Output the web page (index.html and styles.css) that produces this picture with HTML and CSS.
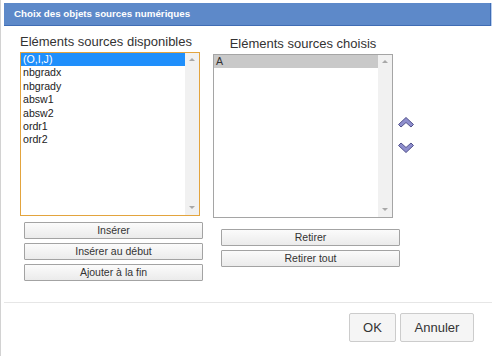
FILE: index.html
```html
<!DOCTYPE html>
<html lang="fr">
<head>
    <meta charset="UTF-8">
    <title>Choix des objets sources numériques</title>
    <link rel="stylesheet" href="styles.css">
</head>
<body>
    <div class="dialog">
        <div class="titlebar">Choix des objets sources numériques</div>
        <div class="content">
            <div class="col col-left">
                <div class="col-label">Eléments sources disponibles</div>
                <div class="listbox focused">
                    <ul class="items">
                        <li class="selected">(O,I,J)</li>
                        <li>nbgradx</li>
                        <li>nbgrady</li>
                        <li>absw1</li>
                        <li>absw2</li>
                        <li>ordr1</li>
                        <li>ordr2</li>
                    </ul>
                    <div class="scrollbar"><span class="arrow up"></span><span class="arrow down"></span></div>
                </div>
                <div class="actions">
                    <button class="btn">Insérer</button>
                    <button class="btn">Insérer au début</button>
                    <button class="btn">Ajouter à la fin</button>
                </div>
            </div>
            <div class="col col-right">
                <div class="col-label">Eléments sources choisis</div>
                <div class="list-row">
                    <div class="listbox">
                        <ul class="items">
                            <li class="selected grey">A</li>
                        </ul>
                        <div class="scrollbar"><span class="arrow up"></span><span class="arrow down"></span></div>
                    </div>
                    <div class="order">
                        <svg width="16" height="11" viewBox="0 0 16 11"><polygon points="0.5,7.5 8,0.5 15.5,7.5 13,10 8,5.5 3,10" fill="#8e8ecd" stroke="#52528c" stroke-width="1" stroke-linejoin="round"/></svg>
                        <svg width="16" height="11" viewBox="0 0 16 11"><polygon points="0.5,3.5 8,10.5 15.5,3.5 13,1 8,5.5 3,1" fill="#8e8ecd" stroke="#52528c" stroke-width="1" stroke-linejoin="round"/></svg>
                    </div>
                </div>
                <div class="actions">
                    <button class="btn">Retirer</button>
                    <button class="btn">Retirer tout</button>
                </div>
            </div>
        </div>
        <div class="footer">
            <button class="footer-btn ok">OK</button>
            <button class="footer-btn cancel">Annuler</button>
        </div>
    </div>
</body>
</html>
```

FILE: styles.css
```css
* {
    margin: 0;
    padding: 0;
    box-sizing: border-box;
    font-family: "Liberation Sans", Arial, sans-serif;
}

body {
    background-color: #ffffff;
    color: #333333;
}

.dialog {
    height: 356px;
    display: flex;
    flex-direction: column;
    border-left: 1px solid #d2d2d2;
}

.titlebar {
    margin: 3px 3px 0 3px;
    height: 23px;
    padding-left: 10px;
    line-height: 22px;
    background-color: #5d89c9;
    border-right: 1px solid #3f6cb4;
    border-bottom: 1px solid #3f6cb4;
    box-shadow: 1px 0 0 #b8cff0;
    color: #ffffff;
    font-size: 9.75px;
    font-weight: bold;
}

.content {
    flex: 1;
    display: flex;
    padding: 8px 0 0 19px;
}

.col-left {
    width: 193px;
}

.col-right {
    padding-top: 2px;
}

.col-label {
    font-size: 13px;
    line-height: 15px;
    color: #333333;
    margin-bottom: 3px;
    white-space: nowrap;
}

.col-right .col-label {
    width: 180px;
    text-align: center;
}

.listbox {
    width: 180px;
    height: 164px;
    display: flex;
    border: 1px solid #a5a5a5;
    background-color: #ffffff;
}

.listbox.focused {
    border-color: #e3a43e;
}

.items {
    flex: 1;
    list-style: none;
    font-size: 10.6px;
    line-height: 13.4px;
    color: #222222;
}

.items li {
    padding-left: 2px;
}

.items li.selected {
    background-color: #1f8ffb;
    color: #ffffff;
}

.items li.selected.grey {
    background-color: #c9c9c9;
    color: #333333;
}

.scrollbar {
    width: 14px;
    background-color: #f1f1f1;
    display: flex;
    flex-direction: column;
    justify-content: space-between;
    align-items: center;
    padding: 5px 0 6px;
}

.arrow {
    width: 0;
    height: 0;
    border-left: 3px solid transparent;
    border-right: 3px solid transparent;
}

.arrow.up {
    border-bottom: 3px solid #a8a8a8;
}

.arrow.down {
    border-top: 3px solid #a8a8a8;
}

.list-row {
    display: flex;
}

.order {
    display: flex;
    flex-direction: column;
    gap: 14px;
    padding: 63px 0 0 5px;
}

.actions {
    display: flex;
    flex-direction: column;
    gap: 4px;
    margin: 6px 0 0 4px;
}

.col-right .actions {
    margin: 11px 0 0 8px;
}

.btn {
    width: 179px;
    height: 17px;
    border: 1px solid #a3a3a3;
    border-radius: 1px;
    background: linear-gradient(#fbfbfb, #ebebeb);
    color: #333333;
    font-size: 10.5px;
    line-height: 15px;
    cursor: pointer;
}

.footer {
    margin: 0 2px 0 3px;
    border-top: 1px solid #e6e6e6;
    padding: 10px 18px 14px 0;
    display: flex;
    justify-content: flex-end;
    gap: 4px;
}

.footer-btn {
    height: 29px;
    border: 1px solid #cccccc;
    border-radius: 2px;
    background-color: #f5f5f5;
    color: #333333;
    font-size: 13px;
    cursor: pointer;
}

.footer-btn.ok {
    width: 47px;
}

.footer-btn.cancel {
    width: 74px;
}
```
